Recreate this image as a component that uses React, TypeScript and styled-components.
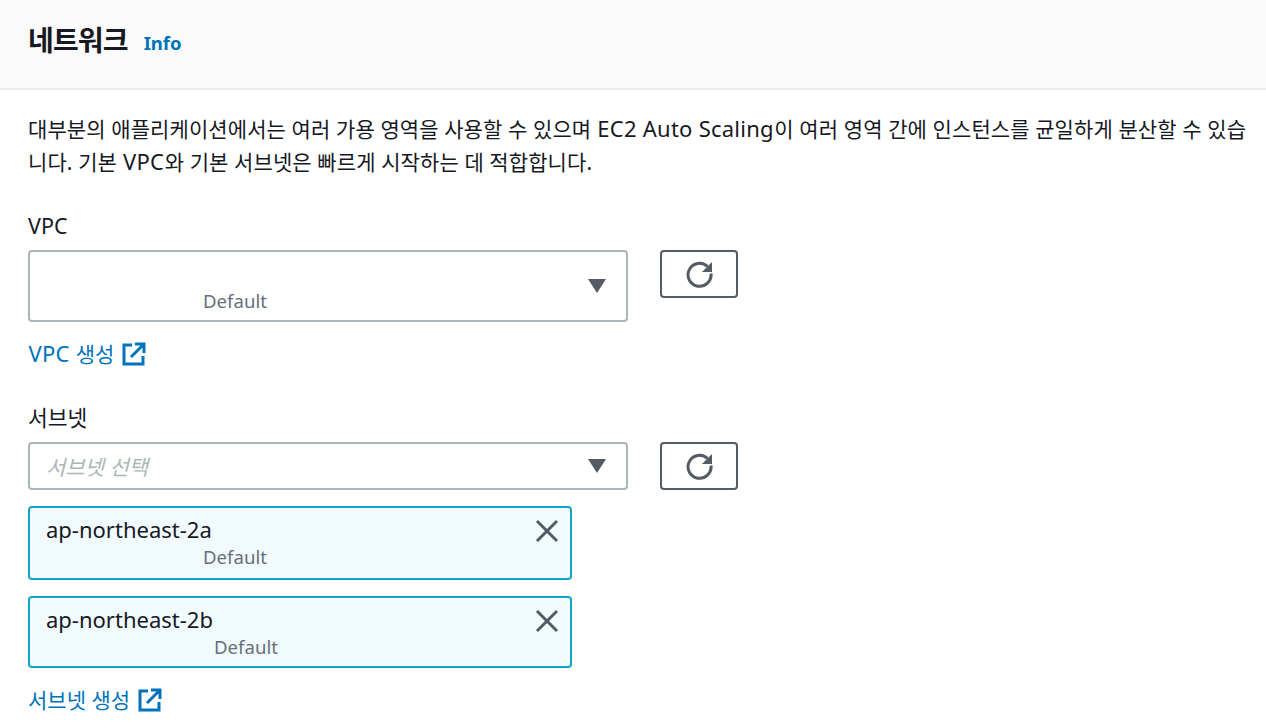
import styled, { createGlobalStyle } from "styled-components";

const GlobalStyle = createGlobalStyle`
  html, body {
    margin: 0;
    padding: 0;
    background: #fff;
    overflow: hidden;
  }
  body {
    font-family: "Noto Sans", "Noto Sans CJK KR", sans-serif;
    color: #16191f;
  }
`;

const Page = styled.div`
  width: 1266px;
  height: 728px;
  overflow: hidden;
`;

const Header = styled.header`
  height: 88px;
  padding: 0 28px;
  display: flex;
  align-items: center;
  gap: 16px;
  background: #fafafa;
  border-bottom: 2px solid #eaeded;
`;

const Title = styled.h2`
  margin: 0 0 8px;
  font-size: 28px;
  line-height: 40px;
  font-weight: 700;
  letter-spacing: -0.85px;
`;

const InfoLink = styled.a`
  margin-bottom: 2px;
  font-size: 18.5px;
  font-weight: 700;
  line-height: 28px;
  color: #0073bb;
`;

const Body = styled.div`
  padding: 23px 8px 0 28px;
`;

const Description = styled.p`
  margin: 0 0 31px;
  font-size: 21px;
  line-height: 33px;
  letter-spacing: 0.1px;
  word-break: break-all;
`;

const Latin = styled.span`
  font-size: 22px;
  line-height: 1;
  letter-spacing: 0.25px;
  margin: 0 0.5px;
`;

const Field = styled.div`
  margin-bottom: 32px;
`;

const Label = styled.div`
  font-size: 21.5px;
  line-height: 32px;
  margin-bottom: 8px;
`;

const ControlRow = styled.div`
  display: flex;
  align-items: flex-start;
  gap: 32px;
`;

const Select = styled.div<{ $tall?: boolean }>`
  position: relative;
  box-sizing: border-box;
  width: 600px;
  height: ${(p) => (p.$tall ? "72px" : "48px")};
  border: 2px solid #aab7b8;
  border-radius: 4px;
  background: #fff;
  padding: 0 16px;
  display: flex;
  align-items: center;
`;

const Placeholder = styled.span`
  font-size: 21px;
  font-style: italic;
  color: #aab7b8;
`;

const Caret = styled.svg`
  position: absolute;
  right: 19px;
  top: 50%;
  margin-top: -8px;
  width: 20px;
  height: 16px;
  fill: #545b64;
`;

const Tag = styled.span<{ $offset: number; $top: number }>`
  position: absolute;
  left: ${(p) => p.$offset}px;
  top: ${(p) => p.$top}px;
  font-size: 18.6px;
  line-height: 24px;
  color: #687078;
`;

const RefreshButton = styled.button`
  box-sizing: border-box;
  width: 78px;
  height: 48px;
  padding: 0;
  border: 2px solid #545b64;
  border-radius: 4px;
  background: #fff;
  display: flex;
  align-items: center;
  justify-content: center;
`;

const CreateLink = styled.a`
  display: flex;
  align-items: center;
  gap: 8px;
  margin-top: 16px;
  font-size: 21px;
  line-height: 32px;
  color: #0073bb;
`;

const Token = styled.div<{ $height: number }>`
  position: relative;
  box-sizing: border-box;
  width: 544px;
  height: ${(p) => p.$height}px;
  margin-top: 16px;
  padding: 5px 16px;
  border: 2px solid #16a3c9;
  border-radius: 4px;
  background: #f1faff;
  font-size: 22px;
  line-height: 32px;
`;

const Dismiss = styled.svg`
  position: absolute;
  right: 11px;
  top: 11px;
  width: 24px;
  height: 24px;
  stroke: #545b64;
  stroke-width: 3;
  fill: none;
`;

function RefreshIcon() {
  return (
    <svg width="28" height="28" viewBox="0 0 28 28" fill="none">
      <path d="M22.5 6.5A11.5 11.5 0 1 0 26 13.5" stroke="#545b64" strokeWidth="3" />
      <path d="M27 2v10H17z" fill="#545b64" />
    </svg>
  );
}

function ExternalIcon() {
  return (
    <svg width="24" height="24" viewBox="0 0 24 24" fill="none" stroke="#0073bb" strokeWidth="3">
      <path d="M10 3H2v19h19v-8" />
      <path d="M9 15L21 3M13 2h9v9" />
    </svg>
  );
}

function CaretIcon() {
  return (
    <Caret viewBox="0 0 20 16">
      <path d="M1 1h18l-9 14z" />
    </Caret>
  );
}

function CloseIcon() {
  return (
    <Dismiss viewBox="0 0 24 24">
      <path d="M2 2l20 20M22 2L2 22" />
    </Dismiss>
  );
}

export default function App() {
  return (
    <Page>
      <GlobalStyle />
      <Header>
        <Title>네트워크</Title>
        <InfoLink>Info</InfoLink>
      </Header>
      <Body>
        <Description>
          대부분의 애플리케이션에서는 여러 가용 영역을 사용할 수 있으며 <Latin>EC2 Auto Scaling</Latin>이 여러 영역 간에 인스턴스를 균일하게 분산할 수 있습니다. 기본 <Latin>VPC</Latin>와 기본 서브넷은 빠르게 시작하는 데 적합합니다.
        </Description>

        <Field>
          <Label>VPC</Label>
          <ControlRow>
            <Select $tall>
              <Tag $offset={173} $top={37}>Default</Tag>
              <CaretIcon />
            </Select>
            <RefreshButton>
              <RefreshIcon />
            </RefreshButton>
          </ControlRow>
          <CreateLink>
            <span><Latin>VPC</Latin> 생성</span> <ExternalIcon />
          </CreateLink>
        </Field>

        <Field>
          <Label>서브넷</Label>
          <ControlRow>
            <Select>
              <Placeholder>서브넷 선택</Placeholder>
              <CaretIcon />
            </Select>
            <RefreshButton>
              <RefreshIcon />
            </RefreshButton>
          </ControlRow>
          <Token $height={74}>
            ap-northeast-2a
            <Tag $offset={173} $top={37}>Default</Tag>
            <CloseIcon />
          </Token>
          <Token $height={72}>
            ap-northeast-2b
            <Tag $offset={184} $top={37}>Default</Tag>
            <CloseIcon />
          </Token>
          <CreateLink>
            서브넷 생성 <ExternalIcon />
          </CreateLink>
        </Field>
      </Body>
    </Page>
  );
}
